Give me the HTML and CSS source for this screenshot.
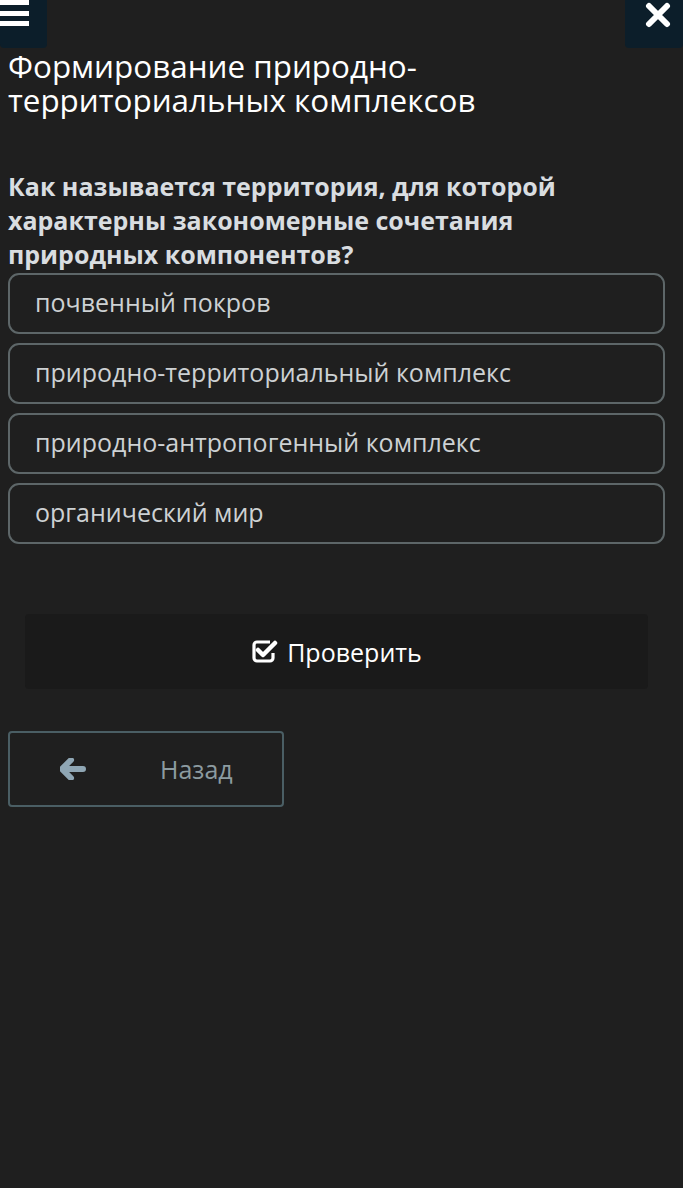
FILE: index.html
```html
<!DOCTYPE html>
<html>
<head>
	<meta charset="utf-8">
	<title>Формирование природно-территориальных комплексов</title>
	<link rel="stylesheet" href="styles.css">
</head>
<body>
	<div class="topbar">
		<a class="corner menu" href="javascript:;">
			<svg width="30" height="28" viewBox="0 0 30 28"><rect x="0" y="0" width="29" height="5" fill="#fff"/><rect x="0" y="11" width="29" height="5" fill="#fff"/><rect x="0" y="21" width="29" height="5" fill="#fff"/></svg>
		</a>
		<a class="corner close" href="javascript:;">
			<svg width="26" height="26" viewBox="0 0 26 26"><path d="M4 4 L22 22 M22 4 L4 22" stroke="#fff" stroke-width="6" stroke-linecap="round"/></svg>
		</a>
	</div>
	<h1 class="title">Формирование природно-<br>территориальных комплексов</h1>
	<p class="question">Как называется территория, для которой характерны закономерные сочетания природных компонентов?</p>
	<ul class="options">
		<li>почвенный покров</li>
		<li>природно-территориальный комплекс</li>
		<li>природно-антропогенный комплекс</li>
		<li>органический мир</li>
	</ul>
	<div class="check">
		<svg width="27" height="26" viewBox="0 0 27 26"><path d="M19 4 H6 A3 3 0 0 0 3 7 V20 A3 3 0 0 0 6 23 H19 A3 3 0 0 0 22 20 V15" fill="none" stroke="#fff" stroke-width="3.2"/><path d="M7 12 L12 17 L24 5" fill="none" stroke="#fff" stroke-width="4.5" stroke-linecap="round" stroke-linejoin="round"/></svg>
		<span>Проверить</span>
	</div>
	<div class="back">
		<svg width="26" height="22" viewBox="0 0 26 22"><path d="M11 2 L2 11 L11 20 M3 11 L23 11" fill="none" stroke="#8fa6b4" stroke-width="6" stroke-linecap="round" stroke-linejoin="round"/></svg>
		<span>Назад</span>
	</div>
</body>
</html>
```
FILE: styles.css
```css
* {
	margin: 0;
	padding: 0;
	box-sizing: border-box;
}
body {
	background: #1f1f1f;
	font-family: "Open Sans", "Noto Sans", sans-serif;
	color: #fff;
	width: 683px;
	min-height: 1188px;
}
a {
	text-decoration: none;
}
.topbar {
	display: flex;
	justify-content: space-between;
	height: 48px;
	margin-bottom: -48px;
}
.corner {
	display: flex;
	background: #0c1e2a;
	height: 48px;
	border-radius: 0 0 4px 4px;
}
.menu {
	width: 47px;
	align-items: flex-start;
}
.close {
	width: 58px;
	justify-content: center;
	align-items: flex-start;
	padding-top: 2px;
	padding-left: 8px;
}
.title {
	font-weight: normal;
	font-size: 31.4px;
	line-height: 34px;
	padding: 49px 8px 0;
	color: #fff;
}
.question {
	font-weight: bold;
	font-size: 25px;
	line-height: 34px;
	color: #d9dde0;
	padding: 52px 8px 0;
	width: 600px;
}
.options {
	list-style: none;
	padding: 2px 18px 0 8px;
	display: flex;
	flex-direction: column;
	gap: 9px;
}
.options li {
	height: 61px;
	border: 2px solid #5d6668;
	border-radius: 11px;
	padding-left: 25px;
	font-size: 25px;
	line-height: 55px;
	color: #cdd1d3;
}
.check {
	margin: 70px 35px 0 25px;
	height: 75px;
	background: #1a1a1a;
	border-radius: 4px;
	display: flex;
	align-items: center;
	justify-content: center;
	gap: 9px;
	font-size: 25px;
	color: #fff;
}
.check svg {
	margin-top: -2px;
}
.back {
	margin: 42px 0 0 8px;
	width: 276px;
	height: 76px;
	border: 2px solid #4a5e64;
	border-radius: 4px;
	display: flex;
	align-items: center;
	padding-left: 50px;
	gap: 74px;
	font-size: 25px;
	color: #8c9ba0;
}
```
